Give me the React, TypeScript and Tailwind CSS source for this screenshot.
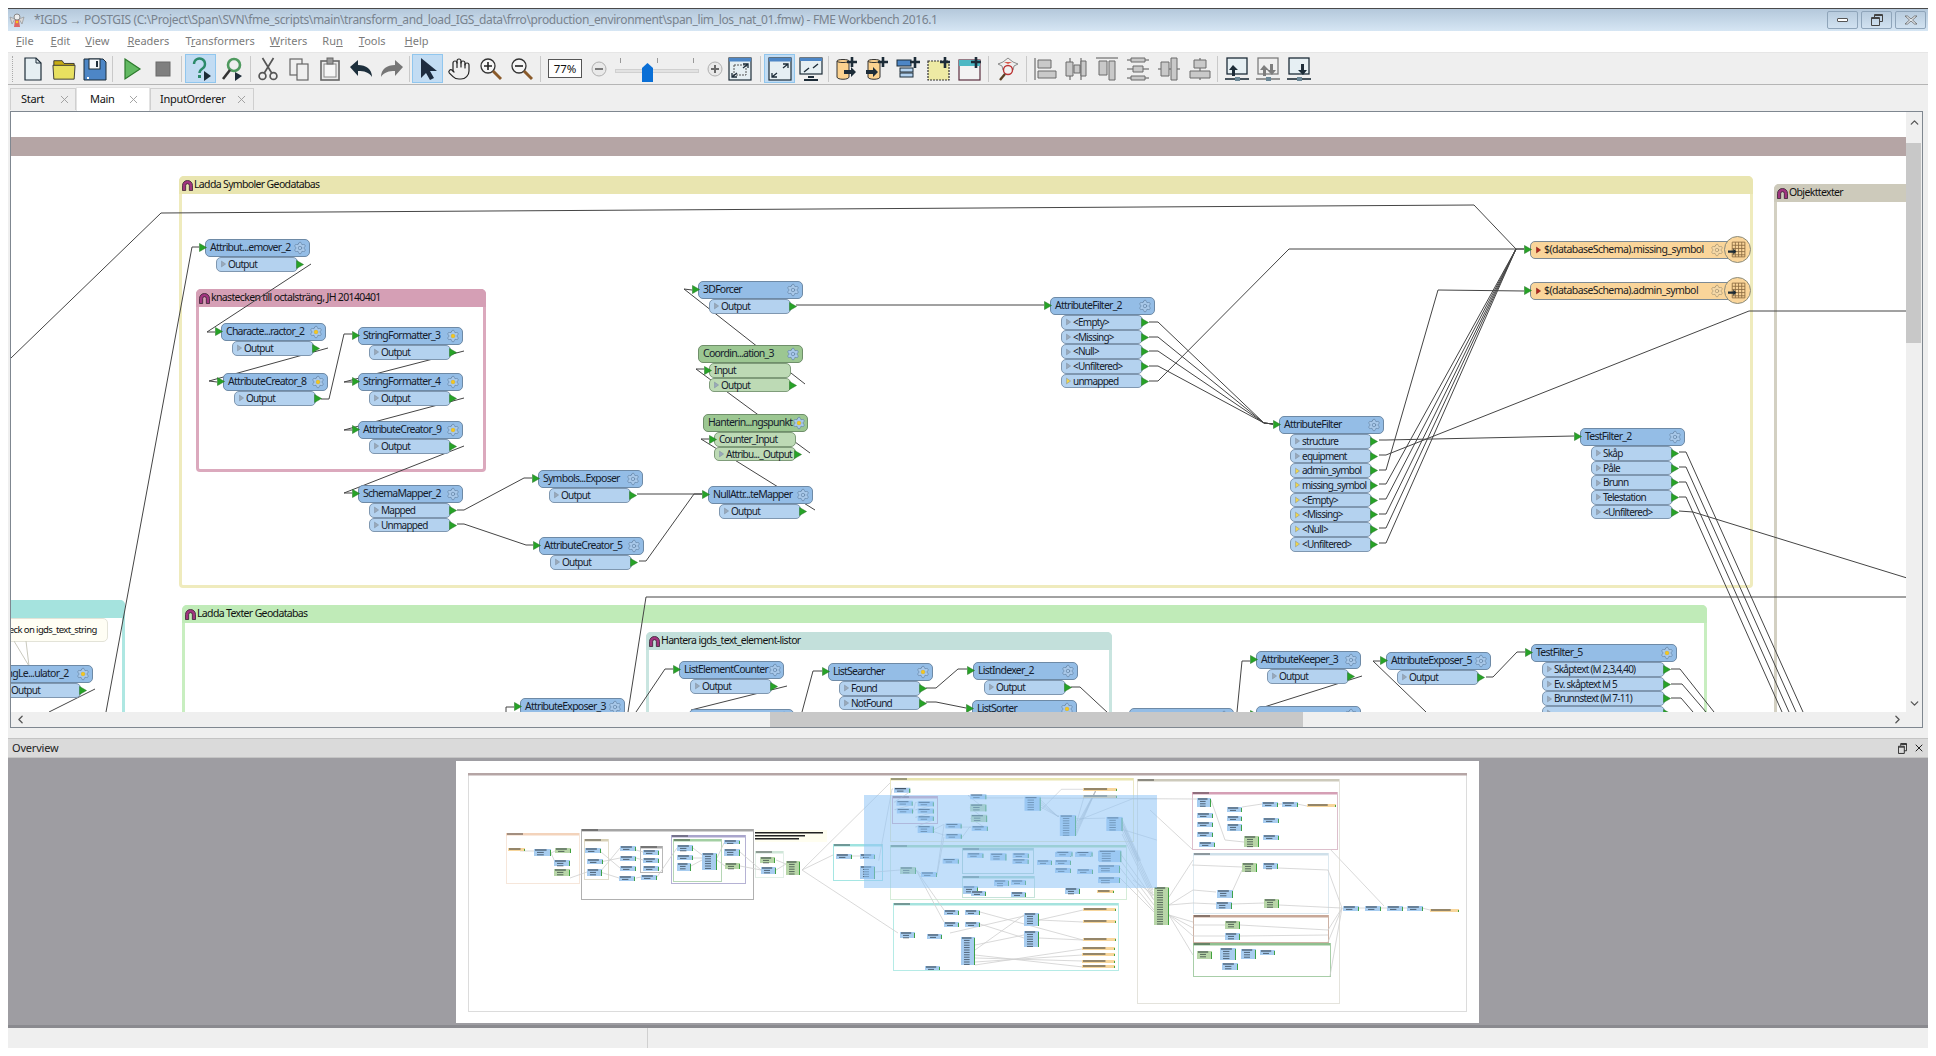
import type { ReactNode } from "react";
import { ChevronDown, ChevronLeft, ChevronRight, ChevronUp, Hand, Settings, X } from "lucide-react";

type NodeData = {
  n: string;
  x: number;
  y: number;
  w?: number;
  ports?: string[];
  warnFrom?: number;
  kind?: "blue" | "green";
  gold?: boolean;
};

const NODES: NodeData[] = [
  { n: "Attribut...emover_2", x: 204, y: 239, ports: ["Output"] },
  { n: "Characte...ractor_2", x: 220, y: 323, ports: ["Output"], gold: true },
  { n: "AttributeCreator_8", x: 222, y: 373, ports: ["Output"], gold: true },
  { n: "StringFormatter_3", x: 357, y: 327, ports: ["Output"], gold: true },
  { n: "StringFormatter_4", x: 357, y: 373, ports: ["Output"], gold: true },
  { n: "AttributeCreator_9", x: 357, y: 421, ports: ["Output"], gold: true },
  { n: "SchemaMapper_2", x: 357, y: 485, ports: ["Mapped", "Unmapped"] },
  { n: "Symbols...Exposer", x: 537, y: 470, ports: ["Output"] },
  { n: "AttributeCreator_5", x: 538, y: 537, ports: ["Output"] },
  { n: "3DForcer", x: 697, y: 281, ports: ["Output"] },
  { n: "Coordin...ation_3", x: 697, y: 345, kind: "green", ports: ["Input", "Output"] },
  { n: "Hanterin...ngspunkt", x: 702, y: 414, kind: "green", gold: true, ports: ["Counter_Input", "Attribu..._Output"] },
  { n: "NullAttr...teMapper", x: 707, y: 486, ports: ["Output"] },
  { n: "AttributeFilter_2", x: 1049, y: 297, ports: ["<Empty>", "<Missing>", "<Null>", "<Unfiltered>", "unmapped"], warnFrom: 4 },
  {
    n: "AttributeFilter",
    x: 1278,
    y: 416,
    ports: ["structure", "equipment", "admin_symbol", "missing_symbol", "<Empty>", "<Missing>", "<Null>", "<Unfiltered>"],
    warnFrom: 2,
  },
  { n: "TestFilter_2", x: 1579, y: 428, ports: ["Skåp", "Påle", "Brunn", "Telestation", "<Unfiltered>"] },
  { n: "AttributeExposer_3", x: 519, y: 698 },
  { n: "ListElementCounter", x: 678, y: 661, ports: ["Output"] },
  { n: "ListSearcher", x: 827, y: 663, ports: ["Found", "NotFound"], gold: true },
  { n: "ListIndexer_2", x: 972, y: 662, ports: ["Output"] },
  { n: "ListSorter", x: 971, y: 700, gold: true },
  { n: "", x: 688, y: 709 },
  { n: "AttributeKeeper_3", x: 1255, y: 651, ports: ["Output"] },
  { n: "", x: 1255, y: 706 },
  { n: "AttributeExposer_5", x: 1385, y: 652, ports: ["Output"] },
  { n: "", x: 1128, y: 708 },
  {
    n: "TestFilter_5",
    x: 1530,
    y: 644,
    w: 146,
    gold: true,
    ports: ["Skåptext (lvl 2,3,4,40)", "Ev. skåptext lvl 5", "Brunnstext (lvl 7-11)", ""],
  },
  { n: "StringLe...ulator_2", x: -13, y: 665, gold: true, ports: ["Output"] },
];

type Frame = { t: string; x: number; y: number; r: number; b: number; head: string; edge: string };

const FRAMES: Frame[] = [
  { t: "Ladda Symboler Geodatabas", x: 178, y: 176, r: 1752, b: 588, head: "bg-[#e9e5b0]", edge: "border-[#efebbd]" },
  { t: "knastecken till octalsträng, JH 20140401", x: 195, y: 289, r: 485, b: 472, head: "bg-[#d59fb5]", edge: "border-[#dba9bd]" },
  { t: "Objekttexter", x: 1773, y: 184, r: 1960, b: 760, head: "bg-[#cdcabb]", edge: "border-[#d3d0c2]" },
  { t: "Ladda Texter Geodatabas", x: 181, y: 605, r: 1706, b: 760, head: "bg-[#c0ebb8]", edge: "border-[#c8eec0]" },
  { t: "Hantera igds_text_element-listor", x: 645, y: 632, r: 1111, b: 760, head: "bg-[#c3e0db]", edge: "border-[#c9e5e0]" },
  { t: "", x: -60, y: 600, r: 124, b: 760, head: "bg-[#a5e3de]", edge: "border-[#aee7e2]" },
];

type Pt = number[];

const LINKS: Pt[] = [
  [10, 358, 160, 213, 1473, 205, 1515, 249, 1523, 249],
  [105, 712, 191, 247, 198, 247],
  [310, 264, 206, 332, 214, 332],
  [327, 348, 208, 381, 216, 382],
  [320, 399, 328, 399, 343, 334, 351, 334],
  [463, 351, 343, 382, 351, 382],
  [463, 398, 343, 430, 351, 430],
  [463, 446, 343, 493, 351, 493],
  [456, 510, 463, 510, 523, 478, 531, 478],
  [456, 524, 463, 524, 525, 545, 532, 545],
  [636, 494, 701, 494],
  [638, 561, 645, 561, 693, 494, 701, 494],
  [814, 510, 700, 439, 708, 439],
  [809, 453, 695, 369, 703, 369],
  [804, 384, 683, 289, 691, 290],
  [795, 305, 1043, 305],
  [1148, 322, 1157, 322, 1263, 423, 1272, 424],
  [1148, 337, 1157, 337, 1263, 423, 1272, 424],
  [1148, 351, 1157, 351, 1263, 423, 1272, 424],
  [1148, 366, 1157, 366, 1263, 423, 1272, 424],
  [1148, 381, 1157, 381, 1288, 249, 1523, 249],
  [1378, 440, 1385, 440, 1573, 436],
  [1378, 455, 1385, 455, 1748, 311, 1906, 311],
  [1378, 470, 1385, 470, 1437, 290, 1523, 291],
  [1378, 484, 1385, 484, 1515, 249],
  [1378, 499, 1385, 499, 1515, 249],
  [1378, 514, 1385, 514, 1515, 249],
  [1378, 528, 1385, 528, 1515, 249],
  [1378, 543, 1385, 543, 1515, 249],
  [1678, 452, 1685, 452, 1802, 712],
  [1678, 467, 1685, 467, 1795, 712],
  [1678, 482, 1685, 482, 1788, 712],
  [1678, 497, 1685, 497, 1781, 712],
  [1678, 511, 1692, 512, 1906, 578],
  [1906, 597, 645, 597, 627, 712],
  [635, 712, 664, 669, 672, 669],
  [505, 712, 505, 707, 513, 707],
  [786, 686, 690, 710],
  [801, 712, 812, 671, 821, 671],
  [925, 688, 935, 688, 957, 669, 966, 669],
  [925, 702, 935, 702, 965, 708],
  [1070, 687, 1079, 687, 1107, 713],
  [1236, 712, 1241, 661, 1249, 661],
  [1361, 676, 1260, 708],
  [1425, 712, 1372, 661, 1379, 661],
  [1485, 677, 1492, 677, 1516, 652, 1524, 652],
  [1670, 669, 1679, 669, 1713, 712],
  [1670, 684, 1681, 684, 1705, 712],
  [1670, 698, 1680, 698, 1692, 712],
  [94, 689, 48, 712],
];

// overview drawing: blue nodes, green nodes, writers and bookmark frames, all in page coordinates
const MINI_FRAMES: [number, number, number, number, string, string][] = [
  [506, 833, 579, 883, "#f3d3bb", "#f6e6da"],
  [581, 829, 753, 899, "#a5a5a5", "#b0b0b0"],
  [584, 839, 608, 879, "#d7d0b5", "#e0dccb"],
  [640, 846, 662, 872, "#a9a9a9", "#b8b8b8"],
  [671, 835, 745, 883, "#a9a5cc", "#b5b2d4"],
  [673, 839, 721, 881, "#a3cfa3", "#b5d6b5"],
  [755, 851, 783, 877, "#cfe6d8", "#e2efe7"],
  [833, 844, 882, 880, "#9fe3e0", "#a5e6e3"],
  [890, 778, 1133, 841, "#e9e5b0", "#ebe8c6"],
  [892, 796, 937, 823, "#d59fb5", "#d5a9bd"],
  [890, 845, 1126, 899, "#a8dcb0", "#d5ecd8"],
  [962, 848, 1033, 873, "#a8d0c8", "#b5d5ce"],
  [962, 876, 1034, 897, "#a8d8c8", "#c5e3da"],
  [893, 903, 1118, 970, "#a5e3de", "#b5ebe6"],
  [1137, 779, 1339, 1003, "#cdcabb", "#e4e3dc"],
  [1192, 792, 1337, 849, "#d59fb5", "#ddbfcc"],
  [1193, 853, 1328, 913, "#cfe0ea", "#dde9f0"],
  [1193, 915, 1328, 942, "#c8a898", "#cdb2a5"],
  [1193, 943, 1330, 976, "#8fbf8f", "#a8cea8"],
];

const MINI_NODES: [number, number, number, number, string][] = [
  [534, 849, 17, 7, "b"], [555, 848, 16, 5, "g"], [554, 860, 16, 6, "b"], [554, 869, 16, 7, "g"], [508, 848, 17, 3, "o"],
  [585, 848, 16, 5, "b"], [587, 859, 16, 5, "b"], [587, 869, 15, 7, "b"], [620, 846, 16, 5, "b"], [620, 856, 16, 5, "b"],
  [620, 866, 16, 5, "b"], [619, 876, 16, 5, "b"], [641, 875, 16, 5, "b"], [643, 850, 16, 5, "b"], [643, 858, 16, 5, "b"],
  [643, 866, 16, 5, "b"], [677, 845, 16, 6, "b"], [677, 855, 16, 5, "b"], [677, 863, 14, 8, "b"], [702, 853, 15, 17, "b"],
  [724, 840, 16, 4, "b"], [724, 849, 16, 7, "b"], [725, 863, 15, 6, "g"], [760, 857, 15, 6, "g"], [761, 867, 15, 7, "b"],
  [786, 861, 14, 14, "g"], [836, 854, 16, 5, "b"], [860, 854, 15, 5, "b"], [860, 866, 15, 13, "b"], [900, 867, 16, 7, "g"],
  [921, 872, 16, 5, "b"], [963, 886, 15, 8, "b"], [994, 880, 15, 6, "b"], [1011, 880, 15, 5, "b"], [1011, 892, 15, 5, "b"],
  [971, 891, 15, 5, "b"], [1037, 860, 15, 5, "b"], [1055, 852, 16, 5, "b"], [1055, 860, 16, 5, "b"], [1055, 868, 16, 5, "b"],
  [1075, 852, 16, 5, "b"], [1077, 869, 16, 5, "b"], [1098, 851, 22, 10, "b"], [1098, 865, 22, 8, "b"], [1098, 877, 22, 6, "b"],
  [1065, 888, 15, 6, "b"], [1097, 890, 17, 3, "o"], [900, 932, 15, 6, "b"], [927, 934, 15, 5, "b"], [961, 937, 14, 28, "b"],
  [925, 966, 15, 4, "b"], [944, 910, 15, 5, "b"], [965, 910, 15, 5, "b"], [944, 922, 15, 5, "b"], [965, 922, 15, 5, "b"],
  [1024, 913, 15, 13, "b"], [1024, 931, 15, 16, "b"], [1083, 908, 33, 3, "o"], [1083, 920, 33, 3, "o"], [1083, 938, 33, 3, "o"],
  [1082, 947, 33, 3, "o"], [1082, 953, 33, 3, "o"], [1082, 960, 33, 3, "o"], [1082, 965, 33, 3, "o"], [1154, 887, 15, 38, "g"],
  [1197, 798, 14, 9, "b"], [1197, 813, 16, 5, "b"], [1197, 822, 16, 5, "b"], [1197, 832, 16, 5, "b"], [1199, 842, 16, 5, "b"],
  [1227, 807, 15, 5, "b"], [1227, 816, 15, 5, "b"], [1227, 824, 15, 7, "b"], [1244, 836, 15, 11, "g"], [1262, 802, 16, 5, "b"],
  [1282, 802, 16, 5, "b"], [1307, 804, 29, 3, "o"], [1263, 818, 16, 5, "b"], [1263, 835, 16, 5, "b"], [1242, 863, 15, 9, "g"],
  [1263, 863, 15, 6, "b"], [1217, 890, 16, 8, "b"], [1216, 902, 16, 7, "b"], [1264, 899, 15, 9, "g"], [1225, 921, 15, 8, "g"],
  [1225, 933, 15, 7, "b"], [1197, 951, 15, 8, "g"], [1220, 948, 16, 12, "b"], [1241, 949, 15, 10, "b"], [1260, 950, 15, 5, "b"],
  [1222, 963, 16, 7, "b"], [1343, 906, 16, 5, "b"], [1365, 906, 16, 5, "b"], [1387, 906, 16, 5, "b"], [1407, 906, 16, 5, "b"],
  [1430, 909, 29, 3, "o"],
];

const MINI_LINKS: Pt[] = [
  [802, 870, 890, 783], [802, 870, 833, 855], [802, 870, 898, 933], [520, 851, 534, 851], [551, 853, 555, 851], [551, 853, 555, 862],
  [570, 878, 587, 872], [600, 872, 620, 848], [600, 862, 620, 858], [601, 852, 620, 868], [600, 872, 619, 878], [636, 878, 641, 877],
  [657, 877, 677, 848], [636, 850, 643, 852], [636, 858, 643, 860], [693, 848, 702, 855], [693, 858, 702, 858], [691, 866, 702, 860],
  [717, 860, 725, 866], [717, 858, 724, 843], [740, 852, 761, 870], [740, 866, 761, 870], [776, 870, 786, 864], [776, 860, 786, 864],
  [852, 856, 860, 856], [875, 872, 900, 870], [916, 870, 921, 874], [916, 870, 944, 910], [916, 870, 944, 922], [937, 873, 944, 825],
  [937, 875, 944, 837], [1169, 897, 1193, 860], [1169, 905, 1193, 890], [1169, 905, 1193, 903], [1169, 915, 1193, 922],
  [1169, 915, 1193, 928], [1169, 915, 1193, 936], [1169, 915, 1193, 955], [1192, 865, 1242, 867], [1193, 890, 1216, 892],
  [1193, 903, 1216, 904], [1232, 892, 1242, 870], [1232, 904, 1264, 903], [1278, 868, 1328, 870, 1342, 908], [1279, 905, 1342, 908],
  [1193, 925, 1225, 925], [1193, 936, 1225, 936], [1240, 925, 1328, 930, 1342, 908], [1240, 936, 1328, 935], [1150, 810, 1192, 849],
  [1034, 798, 1197, 799], [1211, 800, 1225, 840, 1244, 842], [1242, 807, 1262, 804], [1277, 804, 1282, 804], [1297, 804, 1307, 806],
  [1330, 849, 1384, 906], [1357, 908, 1365, 908], [1380, 908, 1387, 908], [1402, 908, 1407, 908], [1422, 908, 1430, 910],
  [1330, 976, 1342, 908], [1328, 942, 1342, 908], [1120, 853, 1154, 900], [1120, 860, 1154, 905], [1120, 868, 1154, 910],
  [1120, 878, 1154, 912], [1133, 880, 1154, 895], [1122, 822, 1153, 890], [1122, 826, 1153, 893], [1122, 830, 1153, 896],
  [1122, 834, 1153, 899], [975, 945, 1024, 935], [975, 950, 1024, 915], [975, 955, 1083, 967], [975, 958, 1082, 961],
  [975, 962, 1082, 955], [975, 965, 1082, 949], [1039, 920, 1083, 910], [1039, 920, 1083, 922], [1039, 938, 1083, 940],
  [980, 912, 1083, 940], [980, 924, 1024, 938], [950, 933, 1024, 916],
];

const BM_X = 890;
const BM_Y = 778;
const BM_SCALE = 0.1544;
const mx = (x: number) => BM_X + (x - 178) * BM_SCALE;
const my = (y: number) => BM_Y + (y - 176) * BM_SCALE;

function pointsOf(p: Pt) {
  const out: string[] = [];
  for (let i = 0; i < p.length; i += 2) out.push(`${p[i]},${p[i + 1]}`);
  return out.join(" ");
}

function Arch() {
  return (
    <svg viewBox="0 0 12 12" className="w-[11px] h-[11px] shrink-0 mr-[1px]">
      <path d="M.5 11.5V6a5.5 5.5 0 0 1 11 0v5.5H8V6a2 2 0 0 0-4 0v5.5z" fill="#a1357f" stroke="#2a1a26" strokeWidth=".8" />
    </svg>
  );
}

function Bookmark({ f }: { f: Frame }) {
  return (
    <div
      className={`absolute rounded-t-[5px] rounded-b-[4px] border-[3px] bg-white ${f.edge}`}
      style={{ left: f.x - 10, top: f.y - 112, width: f.r - f.x, height: f.b - f.y }}
    >
      <div className={`-mx-[3px] -mt-[3px] h-[18px] flex items-center pl-[3px] rounded-t-[5px] text-[10.5px] tracking-[-0.65px] text-[#111] whitespace-nowrap ${f.head}`}>
        {f.t && <Arch />}
        {f.t}
      </div>
    </div>
  );
}

function Tri({ className }: { className: string }) {
  return (
    <svg viewBox="0 0 8 9" className={`w-[8px] h-[9px] ${className}`}>
      <path d="M.5.5 7.5 4.500.5 8.500z" fill="#27a327" stroke="#1f6d1f" strokeWidth=".5" />
    </svg>
  );
}

function PortMark({ warn, red }: { warn?: boolean; red?: boolean }) {
  return (
    <svg viewBox="0 0 6 8" className="w-[5px] h-[8px] shrink-0">
      <path d="M.5.5 5.500 4 .5 7.500z" fill={red ? "#b3261e" : warn ? "#f0d54a" : "#9aa9ba"} stroke={red ? "#7a1a14" : "#7f8ea0"} strokeWidth=".6" />
    </svg>
  );
}

function Gear({ gold }: { gold?: boolean }) {
  return (
    <span className="relative ml-auto mr-[2px] w-[14px] h-[14px] shrink-0 flex items-center justify-center">
      <Settings size={14} strokeWidth={1.1} color="#5f7f9f" fill="#a9c9ea" />
      {gold && <span className="absolute w-[4px] h-[4px] rounded-full bg-[#f4c620]" />}
    </span>
  );
}

function FmeNode({ d }: { d: NodeData }) {
  const green = d.kind === "green";
  const head = green ? "bg-[#9cc792] border-[#6f8f6a]" : "bg-[#94bde6] border-[#6e8aa6]";
  const port = green ? "bg-[#bddab5] border-[#7f9c7a]" : "bg-[#b4d2ef] border-[#7f97b0]";
  return (
    <div className="absolute flex flex-col" style={{ left: d.x - 10, top: d.y - 112, width: d.w ?? 105 }}>
      <div className={`relative h-[18px] flex items-center pl-[4px] rounded-[5px] border text-[#14202c] ${head}`}>
        {!green && <Tri className="absolute -left-[7px] top-[3px]" />}
        <span className="text-[10.5px] tracking-[-0.75px] whitespace-nowrap">{d.n}</span>
        <Gear gold={d.gold} />
      </div>
      {(d.ports ?? []).map((p, i) => {
        const isIn = p === "Input" || p === "Counter_Input";
        return (
          <div key={i} className={`relative h-[14.7px] ml-[11px] mr-[12px] flex items-center gap-[2px] pl-[4px] rounded-[5px] border text-[10px] tracking-[-0.75px] text-[#14202c] whitespace-nowrap ${port}`}>
            {isIn ? (
              <Tri className="absolute -left-[6px] top-[2px]" />
            ) : (
              <>
                <PortMark warn={d.warnFrom !== undefined && i >= d.warnFrom} />
                <Tri className="absolute -right-[7px] top-[2px]" />
              </>
            )}
            {p}
          </div>
        );
      })}
    </div>
  );
}

function Writer({ n, y }: { n: string; y: number }) {
  return (
    <div className="absolute w-[211px] h-[18px] flex items-center pl-[5px] gap-[3px] rounded-[5px] border border-[#7d8a94] bg-[#fad59a] text-[10.5px] text-[#222] tracking-[-0.57px] whitespace-nowrap" style={{ left: 1529 - 10, top: y - 112 }}>
      <Tri className="absolute -left-[7px] top-[3px]" />
      <PortMark red />
      {n}
      <span className="ml-auto mr-[16px] flex">
        <Settings size={14} strokeWidth={1.1} color="#a08e6e" fill="#f6d9a8" />
      </span>
      <span className="absolute -right-[11px] -top-[6px] w-[27px] h-[27px] rounded-full border border-[#8b8b7a] bg-[#fad59a] flex items-center justify-center">
        <svg viewBox="0 0 18 18" className="w-[19px] h-[19px]">
          <path d="M4 2h12v14H4zM4 5h12M4 8h12M4 11h12M4 14h12M7 2v14M10 2v14M13 2v14" fill="none" stroke="#8a6a40" strokeWidth=".8" />
          <path d="M0 10h5V8l3 3-3 3v-2H0z" fill="#1d2a33" />
        </svg>
      </span>
    </div>
  );
}

function Canvas() {
  return (
    <div className="relative flex-1 overflow-hidden bg-white">
      <div className="absolute left-0 right-0 top-[25px] h-[19px] bg-[#b5a5a5]" />
      {FRAMES.map((f) => (
        <Bookmark key={f.t + f.x} f={f} />
      ))}
      <svg viewBox="10 112 1897 600" className="absolute left-0 top-0 w-[1897px] h-[600px]">
        {LINKS.map((l, i) => (
          <polyline key={i} points={pointsOf(l)} fill="none" stroke="#454545" strokeWidth="1" />
        ))}
      </svg>
      <div className="absolute left-[-40px] top-[506px] w-[137px] h-[24px] pl-[26px] flex items-center rounded-[5px] border border-[#e3e3d8] bg-[#fffef4] text-[9.5px] tracking-[-0.6px] text-[#111] whitespace-nowrap">
        Check on igds_text_string
      </div>
      <svg viewBox="0 0 30 25" className="absolute left-[3px] top-[529px] w-[30px] h-[25px]">
        <path d="M0 0 15 25M12 0 15 25" fill="none" stroke="#c9c9bd" strokeWidth="1" />
      </svg>
      {NODES.map((d, i) => (
        <FmeNode key={i} d={d} />
      ))}
      <Writer n="$(databaseSchema).missing_symbol" y={241} />
      <Writer n="$(databaseSchema).admin_symbol" y={282} />
    </div>
  );
}

function MiniNode({ x, y, w, h, fill }: { x: number; y: number; w: number; h: number; fill: string }) {
  const rows: number[] = [];
  for (let r = 0.5; r < h - 0.5; r += 2.4) rows.push(r);
  return (
    <g>
      <rect x={x} y={y} width={w} height={h} fill={fill} />
      {rows.map((r, i) => (
        <rect key={r} x={x + (i ? 3 : 1)} y={y + r} width={w * (i ? 0.4 : 0.68)} height="1" fill="#141c26" opacity={i ? 0.6 : 0.85} />
      ))}
      <rect x={x + w - 1} y={y + 1} width="1" height={Math.max(h - 1, 1)} fill="#2b9a2b" opacity=".85" />
    </g>
  );
}

function Overview() {
  const mainFill = (k?: string) => (k === "green" ? "#b8d6a8" : "#a8cdf0");
  return (
    <svg viewBox="456 761 1023 262" className="w-[1023px] h-[262px] shrink-0 bg-white">
      <rect x="468.5" y="773.5" width="998" height="238" fill="none" stroke="#dcdcdc" />
      <rect x="468" y="773" width="999" height="2.5" fill="#b5a5a5" />
      {MINI_FRAMES.map(([a, b, c, d, col, edge], i) => (
        <g key={i}>
          <rect x={a + 0.5} y={b + 0.5} width={c - a} height={d - b} fill="none" stroke={edge} />
          <rect x={a} y={b} width={c - a} height="2.5" fill={col} />
          <rect x={a + 1} y={b + 0.5} width={Math.min(c - a, 16)} height="1" fill="#222" opacity=".75" />
        </g>
      ))}
      <rect x="755" y="830" width="72" height="12" fill="#fffef0" />
      <rect x="755" y="832" width="68" height="1.5" fill="#222" />
      <rect x="755" y="835" width="50" height="1.5" fill="#222" />
      <rect x="755" y="838" width="44" height="1.5" fill="#222" />
      {MINI_LINKS.map((l, i) => (
        <polyline key={i} points={pointsOf(l)} fill="none" stroke="#cfcfcf" strokeWidth=".8" />
      ))}
      {LINKS.slice(1, 34).map((l, i) => (
        <polyline key={i} points={pointsOf(l.map((v, j) => (j % 2 ? my(v) : mx(v))))} fill="none" stroke="#b4b9bf" strokeWidth=".5" />
      ))}
      {MINI_NODES.map(([a, b, w, h, k], i) => (
        <MiniNode key={i} x={a} y={b} w={w} h={h} fill={k === "g" ? "#b8d6a8" : k === "o" ? "#f7d69c" : "#a8cdf0"} />
      ))}
      {NODES.filter((d) => d.x > 0 && d.n).map((d) => (
        <MiniNode
          key={d.n}
          x={mx(d.x)}
          y={my(d.y)}
          w={(d.w ?? 105) * BM_SCALE}
          h={(18 + (d.ports?.length ?? 1) * 14.7) * BM_SCALE}
          fill={mainFill(d.kind)}
        />
      ))}
      <MiniNode x={1083} y={788} w={34} h={3} fill="#f7d69c" />
      <MiniNode x={1083} y={795} w={34} h={3} fill="#f7d69c" />
      <rect x="864" y="795" width="293" height="93" fill="#8fc4f5" opacity=".55" />
    </svg>
  );
}

function Tool({ active, children }: { active?: boolean; children: ReactNode }) {
  return (
    <div className={`w-[31px] h-[29px] shrink-0 flex items-center justify-center border ${active ? "bg-[#c2dcf3] border-[#90c6ee]" : "border-transparent"}`}>
      {children}
    </div>
  );
}

function Sep({ className }: { className?: string }) {
  return <div className={`w-px h-[26px] shrink-0 bg-[#c9c9c9] ${className ?? "mx-[3px]"}`} />;
}

const ic = "w-[24px] h-[24px]";

function Ic({ children, vb }: { children: ReactNode; vb?: string }) {
  return (
    <svg viewBox={vb ?? "0 0 24 24"} className={ic}>
      {children}
    </svg>
  );
}

function AlignIcon({ d, r }: { d: string; r: string }) {
  return (
    <Ic>
      <path d={d} fill="none" stroke="#555" strokeWidth="1" />
      <path d={r} fill="#c9c9c9" stroke="#6b6b6b" strokeWidth="1" />
    </Ic>
  );
}

function Toolbar() {
  const dark = "#1d2c38";
  return (
    <div className="h-[33px] bg-[#efefef] border-t border-[#e6e6e6] border-b border-b-[#b5b5b5] flex items-center pl-[4px]">
      <div className="w-px h-[26px] mr-[4px] border-l border-dotted border-[#aaa]" />
      <Tool>
        <Ic>
          <path d="M4 1h11l5 5v17H4z" fill="#e6eff3" stroke={dark} strokeWidth="1.2" />
          <path d="M15 1v5h5" fill="none" stroke={dark} />
        </Ic>
      </Tool>
      <Tool>
        <Ic vb="0 0 26 24">
          <path d="M2 9V3h9l2 3h11v3z" fill="#c7ac13" stroke="#333" />
          <path d="M1 8h24l-1 15H2z" fill="#e8e060" stroke="#333" />
        </Ic>
      </Tool>
      <Tool>
        <Ic>
          <path d="M1 2h19l3 3v18H1z" fill="#4d86c6" stroke={dark} />
          <rect x="6" y="2" width="11" height="10" fill="#f4f7fa" stroke={dark} />
          <rect x="13" y="4" width="2" height="6" fill={dark} />
          <rect x="4" y="20" width="2" height="2" fill="#fff" />
        </Ic>
      </Tool>
      <Sep className="ml-[2px] mr-[3px]" />
      <Tool>
        <Ic>
          <path d="M5 2 20 12 5 22z" fill="#62b962" stroke="#2c7a2c" strokeWidth="1.2" />
        </Ic>
      </Tool>
      <Tool>
        <Ic>
          <rect x="5" y="5" width="14" height="14" fill="#7f7f7f" stroke="#6b6b6b" />
        </Ic>
      </Tool>
      <Sep />
      <Tool active>
        <Ic>
          <path d="M5 7a5.500 5.500 0 1 1 8.500 4.600c-2 1.300-3 2.200-3 4.400" fill="none" stroke="#2c8a6a" strokeWidth="2.4" />
          <rect x="9" y="18" width="3" height="3" fill="#2c8a6a" />
          <path d="M15 14l7 5-7 5z" fill="#1d2c38" />
        </Ic>
      </Tool>
      <Tool>
        <Ic>
          <circle cx="14" cy="8" r="6" fill="none" stroke="#4f9a5f" strokeWidth="2.6" />
          <path d="M10 13 3 22" stroke="#333" strokeWidth="2.6" />
          <path d="M15 15l7 4-7 5z" fill="#1d2c38" />
        </Ic>
      </Tool>
      <Sep className="ml-[3px] mr-[1px]" />
      <Tool>
        <Ic>
          <g fill="none" stroke="#565656" strokeWidth="1.7">
            <circle cx="6.500" cy="19" r="3.400" />
            <circle cx="17.500" cy="19" r="3.400" />
            <path d="M8.300 16 17.500 1M15.700 16 6.500 1" />
          </g>
        </Ic>
      </Tool>
      <Tool>
        <Ic>
          <rect x="3" y="2" width="12" height="16" fill="#efefef" stroke="#666" strokeWidth="1.2" />
          <rect x="10" y="7" width="11" height="16" fill="#efefef" stroke="#666" strokeWidth="1.2" />
        </Ic>
      </Tool>
      <Tool>
        <Ic>
          <rect x="3" y="4" width="18" height="19" fill="#e9e9e9" stroke="#666" strokeWidth="1.6" />
          <rect x="6" y="7" width="12" height="13" fill="#f6f6f6" stroke="#888" />
          <rect x="9" y="1" width="6" height="6" fill="#999" stroke="#666" />
        </Ic>
      </Tool>
      <Tool>
        <Ic>
          <path d="M1 10 9 3v5c8 0 14 4 14 12-3-5-8-6-14-6v5z" fill="#1d2f3c" />
        </Ic>
      </Tool>
      <Tool>
        <Ic>
          <path d="M23 10 15 3v5C7 8 1 12 1 20c3-5 8-6 14-6v5z" fill="#767676" />
        </Ic>
      </Tool>
      <Sep className="ml-[2px] mr-[2px]" />
      <Tool active>
        <Ic>
          <path d="M5 1v20l5-5 4 7 4-2-4-7h7z" fill="#1d2c40" />
        </Ic>
      </Tool>
      <Tool>
        <Hand size={24} strokeWidth={1.2} color="#222" />
      </Tool>
      <Tool>
        <Ic>
          <circle cx="10" cy="9" r="7" fill="#f6f6f6" stroke="#333" strokeWidth="1.3" />
          <path d="M6 9h8M10 5v8" stroke="#222" strokeWidth="1.6" />
          <path d="M15 14l8 8" stroke="#8a5a2a" strokeWidth="3" />
        </Ic>
      </Tool>
      <Tool>
        <Ic>
          <circle cx="10" cy="9" r="7" fill="#f6f6f6" stroke="#333" strokeWidth="1.3" />
          <path d="M6 9h8" stroke="#222" strokeWidth="1.6" />
          <path d="M15 14l8 8" stroke="#8a5a2a" strokeWidth="3" />
        </Ic>
      </Tool>
      <Sep className="ml-[4px] mr-[3px]" />
      <div className="ml-[4px] w-[34px] h-[19px] bg-white border border-[#555] text-[11.5px] text-[#111] flex items-center justify-center">77%</div>
      <svg viewBox="0 0 16 16" className="ml-[9px] w-[16px] h-[16px]">
        <circle cx="8" cy="8" r="7" fill="#e9e9e9" stroke="#b0b0b0" />
        <path d="M4 8h8" stroke="#7a7a7a" strokeWidth="2" />
      </svg>
      <div className="relative ml-[8px] w-[84px] h-[29px]">
        <div className="absolute left-0 right-0 top-[15px] h-[4px] bg-[#e2e2e2] border border-[#d0d0d0]" />
        <div className="absolute left-[5px] top-[4px] w-px h-[5px] bg-[#999]" />
        <div className="absolute left-[42px] top-[4px] w-px h-[5px] bg-[#999]" />
        <div className="absolute left-[78px] top-[4px] w-px h-[5px] bg-[#999]" />
        <svg viewBox="0 0 11 19" className="absolute left-[27px] top-[9px] w-[11px] h-[19px]">
          <path d="M5.500 0 11 5v14H0V5z" fill="#0a6fd6" />
        </svg>
      </div>
      <svg viewBox="0 0 16 16" className="ml-[8px] w-[16px] h-[16px]">
        <circle cx="8" cy="8" r="7" fill="#e9e9e9" stroke="#b0b0b0" />
        <path d="M4 8h8M8 4v8" stroke="#6a6a6a" strokeWidth="2" />
      </svg>
      <Fit className="ml-[5px]" dashed />
      <Sep className="ml-[8px] mr-[3px]" />
      <Tool active>
        <Fit />
      </Tool>
      <Tool>
        <Ic>
          <rect x="1" y="1" width="22" height="16" fill="#e6eff3" stroke={dark} strokeWidth="1.2" />
          <rect x="1" y="1" width="22" height="3" fill="#4d86c6" />
          <path d="M14 11l5-4M5 15l5-4" stroke={dark} strokeWidth="1.4" />
          <path d="M9 20h6M5 23h14" stroke={dark} strokeWidth="2" />
        </Ic>
      </Tool>
      <Sep className="ml-[2px] mr-[1px]" />
      <Tool>
        <DbAdd dir="out" />
      </Tool>
      <Tool>
        <DbAdd dir="in" />
      </Tool>
      <Tool>
        <Ic>
          <rect x="1" y="3" width="14" height="6" fill="#4d86c6" stroke={dark} />
          <rect x="4" y="11" width="13" height="4" fill="#b4d2ef" stroke={dark} />
          <rect x="4" y="16" width="13" height="4" fill="#b4d2ef" stroke={dark} />
          <path d="M19 0v11M14 5h10" stroke={dark} strokeWidth="2.6" />
        </Ic>
      </Tool>
      <Tool>
        <Ic>
          <rect x="1" y="4" width="21" height="19" fill="#eeeaa4" stroke="#333" strokeDasharray="2 1" strokeWidth="1.2" />
          <path d="M18 0v11M13 5h10" stroke={dark} strokeWidth="2.6" />
        </Ic>
      </Tool>
      <Tool>
        <Ic>
          <rect x="1" y="3" width="21" height="20" fill="#f3f3f3" stroke="#5b2d3f" strokeWidth="1.2" />
          <rect x="1" y="3" width="21" height="6" fill="#4db8c4" />
          <path d="M18 0v11M13 5h10" stroke={dark} strokeWidth="2.6" />
        </Ic>
      </Tool>
      <Sep />
      <Tool>
        <Ic>
          <path d="M12 1 7 5 2 7l4 2 1 4h10l1-4 4-2-5-2z" fill="#eee" stroke="#8a8a8a" />
          <path d="M8 5l4 2 4-2" fill="#d8584a" />
          <circle cx="12" cy="13" r="4.500" fill="#f2f2f2" stroke="#b33" strokeWidth="1.4" />
          <path d="M9 17 4 23" stroke="#5a4025" strokeWidth="2.4" />
        </Ic>
      </Tool>
      <Sep className="ml-[3px] mr-[2px]" />
      <Tool>
        <AlignIcon d="M2 1v22" r="M5 3h13v8H5zM5 14h18v7H5z" />
      </Tool>
      <Tool>
        <AlignIcon d="M6 1v22M17 1v22" r="M2 5h7v14H2zM10 8h6v8h-6zM17 4h5v15h-5z" />
      </Tool>
      <Tool>
        <AlignIcon d="M1 1h22" r="M4 4h8v14H4zM14 4h6v19h-6z" />
      </Tool>
      <Tool>
        <AlignIcon d="M1 3h22M1 12h22M1 21h22" r="M5 1h14v4H5zM7 9h10v6H7zM5 19h14v4H5z" />
      </Tool>
      <Tool>
        <AlignIcon d="M1 12h22" r="M4 5h8v14H4zM14 1h6v22h-6z" />
      </Tool>
      <Tool>
        <AlignIcon d="M12 1v22" r="M6 3h12v8H6zM2 14h20v7H2z" />
      </Tool>
      <Sep className="ml-[2px] mr-[3px]" />
      <Tool>
        <Net dir="up" />
      </Tool>
      <Tool>
        <Net dir="both" />
      </Tool>
      <Tool>
        <Net dir="down" />
      </Tool>
    </div>
  );
}

function Fit({ className, dashed }: { className?: string; dashed?: boolean }) {
  return (
    <svg viewBox="0 0 24 24" className={`w-[24px] h-[24px] shrink-0 ${className ?? ""}`}>
      <rect x="1" y="1" width="22" height="22" fill="#e6eff3" stroke="#1d2c38" strokeWidth="1.2" />
      <rect x="1" y="1" width="22" height="3.500" fill="#4d86c6" />
      {dashed && <rect x="6" y="8" width="12" height="10" fill="none" stroke="#555" strokeDasharray="2 1" />}
      <path d="M15 11l5-4M15 7h5v4M4 20l5-4M4 16v4h5" fill="none" stroke="#1d2c38" strokeWidth="1.3" />
    </svg>
  );
}

function DbAdd({ dir }: { dir: "in" | "out" }) {
  const x = dir === "out" ? 10 : 1;
  return (
    <svg viewBox="0 0 24 24" className={ic}>
      <path d="M3 4c0-2 12-2 12 0v16c0 3-12 3-12 0z" fill="#fcd28f" stroke="#333" />
      <path d="M3 4c0 2 12 2 12 0" fill="none" stroke="#333" />
      <path d="M18 0v10M13 5h10" stroke="#1d2c38" strokeWidth="2.6" />
      <path d={`M${x} 13h7v-3l5 5-5 5v-3h-7z`} fill="#1d2c38" />
    </svg>
  );
}

function Net({ dir }: { dir: "up" | "down" | "both" }) {
  const col = dir === "both" ? "#7d7d7d" : "#1d2c38";
  return (
    <svg viewBox="0 0 24 24" className={ic}>
      <rect x="2" y="1" width="20" height="16" fill={dir === "both" ? "none" : "#e6eff3"} stroke={col} strokeWidth="1.3" />
      {dir !== "down" && <path d="M8 8l-4 5h3v6h3v-6h3z" fill={col} />}
      {dir !== "up" && <path d="M16 18l4-5h-3V7h-3v6h-3z" fill={col} />}
      <path d="M0 22h24" stroke={col} strokeWidth="1.6" />
      <rect x="10" y="20" width="5" height="4" fill="#6b8796" />
    </svg>
  );
}

function Title() {
  return (
    <div className="h-[23px] flex items-center border-t border-[#4a4a4a] bg-linear-to-b from-[#b4c8db] to-[#d6e6f4]">
      <svg viewBox="0 0 16 16" className="ml-[1px] w-[16px] h-[16px] shrink-0">
        <circle cx="8" cy="5" r="3" fill="#eee" stroke="#888" />
        <path d="M1 5 6 7 3 12zM15 5l-5 2 3 5z" fill="#d9d9d9" stroke="#888" strokeWidth=".6" />
        <path d="M6 8h4l1 7H5z" fill="#d66" />
        <circle cx="8" cy="10" r="1.300" fill="#f4c620" />
      </svg>
      <span className="ml-[9px] text-[12px] tracking-[-0.36px] text-[#79838e] whitespace-nowrap">
        *IGDS → POSTGIS (C:\Project\Span\SVN\fme_scripts\main\transform_and_load_IGS_data\frro\production_environment\span_lim_los_nat_01.fmw) - FME Workbench 2016.1
      </span>
      <div className="ml-auto mr-[2px] flex gap-[3px]">
        <div className="w-[31px] h-[18px] rounded-[2px] border border-[#8fa5ba] flex items-center justify-center">
          <div className="w-[11px] h-[4px] border border-[#555] bg-white rounded-[1px]" />
        </div>
        <div className="w-[31px] h-[18px] rounded-[2px] border border-[#8fa5ba] flex items-center justify-center">
          <svg viewBox="0 0 12 12" className="w-[12px] h-[12px]">
            <path d="M3.500 3V.5h8v7H9M.5 3.500h8v8h-8z" fill="none" stroke="#444" />
            <path d="M4 1.500h7M1 4.500h7" stroke="#444" />
          </svg>
        </div>
        <div className="w-[31px] h-[18px] rounded-[2px] border border-[#8fa5ba] flex items-center justify-center">
          <svg viewBox="0 0 14 10" className="w-[14px] h-[10px]">
            <path d="M1 1h2.500L7 4l3.500-3H13L8.500 5l4.500 4h-2.500L7 6 3.500 9H1l4.500-4z" fill="#e9eef3" stroke="#666" strokeWidth=".8" />
          </svg>
        </div>
      </div>
    </div>
  );
}

const MENU: [string, string, string, string][] = [
  ["", "F", "ile", "ml-[8px]"],
  ["", "E", "dit", "ml-[17px]"],
  ["", "V", "iew", "ml-[15px]"],
  ["", "R", "eaders", "ml-[18px]"],
  ["T", "r", "ansformers", "ml-[16px]"],
  ["", "W", "riters", "ml-[15px]"],
  ["Ru", "n", "", "ml-[15px]"],
  ["", "T", "ools", "ml-[16px]"],
  ["", "H", "elp", "ml-[19px]"],
];

function Menu() {
  return (
    <div className="h-[21px] bg-white flex items-center text-[11px] text-[#7b7b7b]">
      {MENU.map(([a, u, b, cls]) => (
        <span key={u + b} className={cls}>
          {a}
          <span className="underline">{u}</span>
          {b}
        </span>
      ))}
    </div>
  );
}

function Tab({ label, active, w, pad, textW }: { label: string; active?: boolean; w: string; pad: string; textW: string }) {
  return (
    <div className={`${w} ${pad} flex items-center text-[11px] tracking-[-0.3px] text-[#111] ${active ? "h-[24px] bg-white border-x border-t border-[#e3e3e3]" : "h-[22px] mb-px bg-[#eeeeee] border-x border-t border-[#cfcfcf]"}`}>
      <span className={textW}>{label}</span>
      <X size={13} strokeWidth={1.7} color="#9c9c9c" />
    </div>
  );
}

export default function App() {
  return (
    <div className="w-[1936px] h-[1056px] overflow-hidden bg-white pt-2 px-2 flex flex-col [font-family:'Noto_Sans',sans-serif]">
      <Title />
      <Menu />
      <Toolbar />
      <div className="h-[26px] bg-[#efefef] flex items-end pl-[2px]">
        <Tab label="Start" w="w-[66px]" pad="pl-[10px]" textW="w-[37px]" />
        <Tab label="Main" active w="w-[74px]" pad="pl-[13px]" textW="w-[37px]" />
        <Tab label="InputOrderer" w="w-[104px]" pad="pl-[9px]" textW="w-[75px]" />
      </div>
      <div className="bg-[#efefef] pl-[2px] pr-[5px]">
        <div className="h-[617px] flex flex-col border border-[#7f8790]">
          <div className="flex h-[600px]">
            <Canvas />
            <div className="w-[16px] bg-[#efefef] flex flex-col items-center relative">
              <ChevronUp size={13} strokeWidth={2.4} color="#555" className="mt-[4px]" />
              <div className="absolute left-0 right-[1px] top-[31px] h-[200px] bg-[#c8c8c8]" />
              <ChevronDown size={13} strokeWidth={2.4} color="#555" className="mt-auto mb-[2px]" />
            </div>
          </div>
          <div className="h-[15px] bg-[#efefef] flex items-center relative">
            <ChevronLeft size={13} strokeWidth={2.4} color="#555" className="ml-[3px]" />
            <div className="absolute left-[759px] w-[533px] top-0 bottom-0 bg-[#c8c8c8]" />
            <ChevronRight size={13} strokeWidth={2.4} color="#555" className="ml-auto mr-[18px]" />
          </div>
        </div>
      </div>
      <div className="h-[10px] bg-[#efefef]" />
      <div className="h-[20px] flex items-center pl-[4px] pr-[3px] bg-[#dadada] border-y border-[#c4c4c4] text-[11px] tracking-[-0.2px] text-[#222]">
        Overview
        <svg viewBox="0 0 10 12" className="ml-auto w-[9px] h-[11px]">
          <path d="M3 3V.5h6.500v8H7M.5 3.500h6.500v8H.5z" fill="none" stroke="#222" />
          <path d="M3.500 1.500h6M1 4.500h6" stroke="#222" />
        </svg>
        <X size={12} strokeWidth={2} color="#222" className="ml-[6px]" />
      </div>
      <div className="h-[270px] bg-[#9e9da2] border-b-[3px] border-[#8a8a8f] flex pt-[3px]">
        <div className="w-[448px] shrink-0" />
        <Overview />
      </div>
      <div className="h-[20px] bg-[#efefef] flex">
        <div className="w-[640px] border-r border-[#d0d0d0]" />
      </div>
    </div>
  );
}
